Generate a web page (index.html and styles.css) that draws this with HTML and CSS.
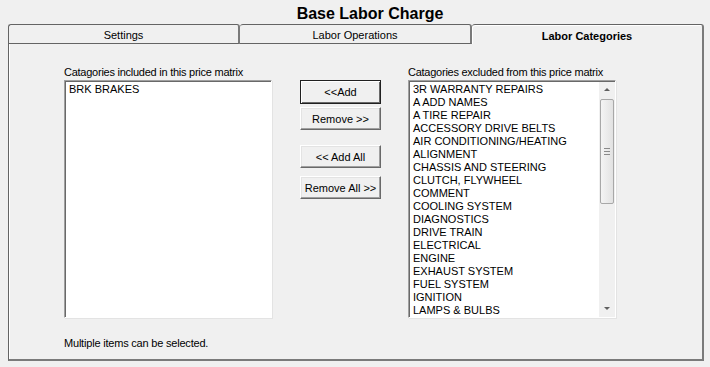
FILE: index.html
```html
<!DOCTYPE html>
<html lang="en">
<head>
  <meta charset="UTF-8">
  <title>Base Labor Charge</title>
  <link rel="stylesheet" href="styles.css">
</head>
<body>
  <div id="title">Base Labor Charge</div>

  <div id="tabs">
    <div class="tab">Settings</div>
    <div class="tab">Labor Operations</div>
    <div class="tab active">Labor Categories</div>
  </div>

  <div id="panel">
    <div class="columns">
      <div class="col">
        <div class="caption">Catagories included in this price matrix</div>
        <div class="listbox">
          <div class="items">
            <div>BRK BRAKES</div>
          </div>
        </div>
      </div>

      <div class="buttons">
        <button class="default">&lt;&lt;Add</button>
        <button class="remove">Remove &gt;&gt;</button>
        <button class="add-all">&lt;&lt; Add All</button>
        <button class="remove-all">Remove All &gt;&gt;</button>
      </div>

      <div class="col">
        <div class="caption">Catagories excluded from this price matrix</div>
        <div class="listbox">
          <div class="items">
            <div>3R WARRANTY REPAIRS</div>
            <div>A ADD NAMES</div>
            <div>A TIRE REPAIR</div>
            <div>ACCESSORY DRIVE BELTS</div>
            <div>AIR CONDITIONING/HEATING</div>
            <div>ALIGNMENT</div>
            <div>CHASSIS AND STEERING</div>
            <div>CLUTCH, FLYWHEEL</div>
            <div>COMMENT</div>
            <div>COOLING SYSTEM</div>
            <div>DIAGNOSTICS</div>
            <div>DRIVE TRAIN</div>
            <div>ELECTRICAL</div>
            <div>ENGINE</div>
            <div>EXHAUST SYSTEM</div>
            <div>FUEL SYSTEM</div>
            <div>IGNITION</div>
            <div>LAMPS &amp; BULBS</div>
          </div>
          <div class="scrollbar">
            <div class="arrow up"></div>
            <div class="track">
              <div class="thumb"><span class="grip"></span></div>
            </div>
            <div class="arrow down"></div>
          </div>
        </div>
      </div>
    </div>

    <div class="hint">Multiple items can be selected.</div>
  </div>
</body>
</html>
```

FILE: styles.css
```css
html, body {
  margin: 0;
  padding: 0;
  background: #f0f0f0;
  width: 710px;
  height: 367px;
  overflow: hidden;
  font-family: "Liberation Sans", Arial, sans-serif;
  font-size: 11px;
  color: #000;
}
#title {
  height: 24px;
  line-height: 28px;
  padding-left: 30px;
  text-align: center;
  font-size: 16px;
  font-weight: bold;
}
#tabs {
  display: flex;
  margin-left: 8px;
  width: 696px;
  height: 20px;
}
.tab {
  box-sizing: border-box;
  width: 232px;
  height: 20px;
  line-height: 20px;
  text-align: center;
  border-top: 1px solid #646464;
  border-right: 2px solid #7a7a7a;
  border-bottom: 1px solid #646464;
  border-top-left-radius: 3px;
  border-top-right-radius: 3px;
}
.tab:first-child {
  border-left: 1px solid #646464;
}
.tab.active {
  width: 232px;
  border-bottom: none;
  font-weight: bold;
  line-height: 23px;
  box-shadow: inset 1px 1px 0 #fff;
}
#panel {
  box-sizing: border-box;
  margin-left: 8px;
  width: 696px;
  height: 317px;
  border-left: 1px solid #646464;
  border-right: 2px solid #7a7a7a;
  border-bottom: 2px solid #7a7a7a;
  padding: 22px 0 0 55px;
  box-shadow: inset 1px 0 0 #fff;
}
.columns {
  display: flex;
}
.caption {
  height: 13px;
  line-height: 13px;
  margin-bottom: 1px;
  white-space: nowrap;
  letter-spacing: -0.25px;
}
.col {
  width: 208px;
}
.listbox {
  box-sizing: border-box;
  display: flex;
  height: 238px;
  background: #fff;
  border-top: 1px solid #a0a0a0;
  border-left: 1px solid #a0a0a0;
  border-right: 1px solid #fff;
  border-bottom: 1px solid #fff;
  box-shadow: inset 1px 1px 0 #696969, 1px 1px 0 #e3e3e3;
}
.items {
  flex: 1;
  padding: 2px 0 0 4px;
  line-height: 13px;
  white-space: nowrap;
  overflow: hidden;
}
.scrollbar {
  width: 16px;
  margin: 1px 0 0 0;
  display: flex;
  flex-direction: column;
  background: #f0f0f0;
}
.arrow {
  height: 16px;
  position: relative;
}
.arrow::after {
  content: "";
  position: absolute;
  left: 5px;
  top: 6px;
  border-left: 3px solid transparent;
  border-right: 3px solid transparent;
}
.arrow.up::after {
  border-bottom: 3px solid #606060;
}
.arrow.down::after {
  border-top: 3px solid #606060;
}
.track {
  flex: 1;
  padding-top: 1px;
}
.thumb {
  box-sizing: border-box;
  height: 105px;
  margin: 0 1px;
  border: 1px solid #a8a8a8;
  border-radius: 2px;
  background: linear-gradient(to right, #f4f4f4, #e2e2e2);
  display: flex;
  align-items: center;
  justify-content: center;
}
.grip {
  width: 6px;
  height: 5px;
  border-top: 1px solid #8a8a8a;
  border-bottom: 1px solid #8a8a8a;
  position: relative;
}
.grip::after {
  content: "";
  position: absolute;
  left: 0;
  right: 0;
  top: 2px;
  border-top: 1px solid #8a8a8a;
}
.buttons {
  display: flex;
  flex-direction: column;
  width: 81px;
  margin: 14px 27px 0 28px;
}
button {
  box-sizing: border-box;
  width: 81px;
  height: 23px;
  padding: 0;
  font-family: inherit;
  font-size: 11px;
  color: #000;
  background: #f0f0f0;
  border: 1px solid;
  border-color: #fff #696969 #696969 #fff;
  box-shadow: inset -1px -1px 0 #a0a0a0, inset 1px 1px 0 #e3e3e3;
  border-radius: 0;
}
button.default {
  height: 24px;
  border: 1px solid #202020;
  box-shadow: inset 1px 1px 0 #fff, inset -1px -1px 0 #696969;
}
button.remove {
  margin-top: 3px;
}
button.add-all {
  margin-top: 15px;
}
button.remove-all {
  margin-top: 8px;
}
.hint {
  margin-top: 19px;
  line-height: 13px;
  letter-spacing: -0.2px;
}
```
